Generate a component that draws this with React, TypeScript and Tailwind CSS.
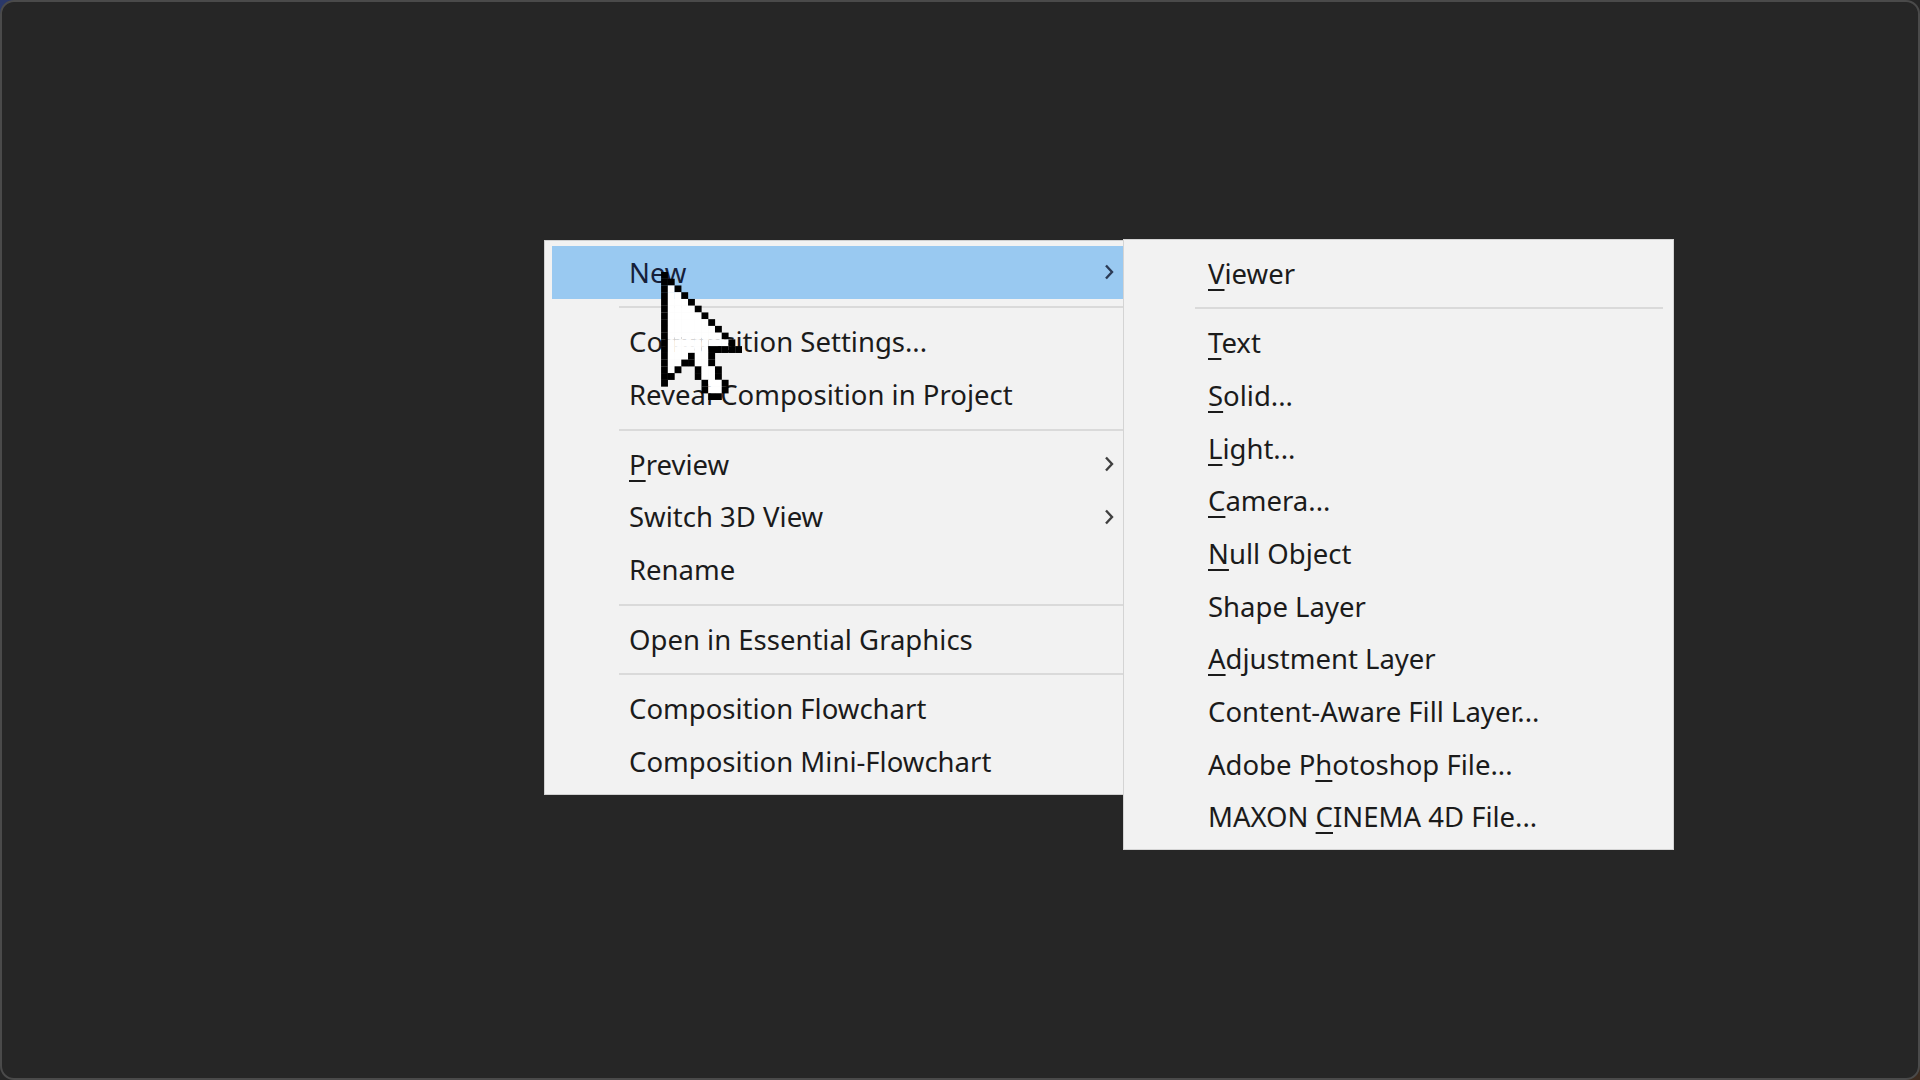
import React from "react";

const CURSOR = [
  "B...........",
  "BB..........",
  "BWB.........",
  "BWWB........",
  "BWWWB.......",
  "BWWWWB......",
  "BWWWWWB.....",
  "BWWWWWWB....",
  "BWWWWWWWB...",
  "BWWWWWWWWB..",
  "BWWWWWWWWWB.",
  "BWWWWWWBBBBB",
  "BWWWBWWB....",
  "BWWBBWWB....",
  "BWB..BWWB...",
  "BB...BWWB...",
  "B.....BWWB..",
  "......BWWB..",
  ".......BB...",
];

function Cursor() {
  const rects: React.ReactNode[] = [];
  CURSOR.forEach((row, y) => {
    row.split("").forEach((c, x) => {
      if (c === "B" || c === "W") {
        rects.push(
          <rect key={`${x}-${y}`} x={x} y={y} width={1.02} height={1.02} fill={c === "B" ? "#000" : "#fff"} />
        );
      }
    });
  });
  return (
    <svg
      className="absolute left-[659px] top-[270px] w-[81px] h-[128px] pointer-events-none"
      viewBox="0 0 12 19"
    >
      {rects}
    </svg>
  );
}

function Chevron({ hi }: { hi?: boolean }) {
  return (
    <svg className="w-[12px] h-[18px]" viewBox="0 0 12 18" fill="none">
      <path d="M3 2.5 L9 9 L3 15.5" stroke={hi ? "#2b3a55" : "#404040"} strokeWidth="2.4" />
    </svg>
  );
}

function M({ t, u }: { t: string; u?: number }) {
  if (u === undefined) return <>{t}</>;
  return (
    <>
      {t.slice(0, u)}
      <span className="underline decoration-[2px] underline-offset-[5px]">{t[u]}</span>
      {t.slice(u + 1)}
    </>
  );
}

function MainRow({ t, u, sub, hi }: { t: string; u?: number; sub?: boolean; hi?: boolean }) {
  return (
    <div
      className={`h-[52.7px] flex items-center pl-[77px] pr-[10px] ${hi ? "bg-[#99c9f1] text-[#16203a]" : ""}`}
    >
      <span className="flex-1"><M t={t} u={u} /></span>
      {sub && <Chevron hi={hi} />}
    </div>
  );
}

function MainSep() {
  return (
    <div className="h-[17px] flex items-center pl-[67px]">
      <div className="h-[2px] w-full bg-[#dadada]" />
    </div>
  );
}

function SubRow({ t, u }: { t: string; u?: number }) {
  return (
    <div className="h-[52.7px] flex items-center pl-[84px]">
      <span><M t={t} u={u} /></span>
    </div>
  );
}

export default function App() {
  return (
    <div className="w-[1920px] h-[1080px] bg-linear-to-br from-[#2a3869] via-[#262626] to-[#3d2c20] overflow-hidden">
      <div
        className="relative w-full h-full rounded-[14px] border-2 border-[#4a4a4a] bg-[#262626] overflow-hidden text-[#1b1b1b] text-[27.5px] leading-none"
        style={{ fontFamily: '"Noto Sans", "Open Sans", sans-serif' }}
      >
        {/* main context menu */}
        <div className="absolute left-[542px] top-[238px] w-[582px] h-[555px] bg-[#f2f2f2] border border-[#d0d0d0] pl-[7px] pt-[5px] pb-[5px] flex flex-col">
          <MainRow t="New" hi sub />
          <MainSep />
          <MainRow t="Composition Settings..." />
          <MainRow t="Reveal Composition in Project" />
          <MainSep />
          <MainRow t="Preview" u={0} sub />
          <MainRow t="Switch 3D View" sub />
          <MainRow t="Rename" />
          <MainSep />
          <MainRow t="Open in Essential Graphics" />
          <MainSep />
          <MainRow t="Composition Flowchart" />
          <MainRow t="Composition Mini-Flowchart" />
        </div>

        {/* submenu */}
        <div className="absolute left-[1121px] top-[237px] w-[551px] h-[611px] bg-[#f2f2f2] border border-[#d4d4d4] pt-[7px] flex flex-col">
          <SubRow t="Viewer" u={0} />
          <div className="h-[17px] flex items-center pl-[71px] pr-[10px]">
            <div className="h-[2px] w-full bg-[#dadada]" />
          </div>
          <SubRow t="Text" u={0} />
          <SubRow t="Solid..." u={0} />
          <SubRow t="Light..." u={0} />
          <SubRow t="Camera..." u={0} />
          <SubRow t="Null Object" u={0} />
          <SubRow t="Shape Layer" />
          <SubRow t="Adjustment Layer" u={0} />
          <SubRow t="Content-Aware Fill Layer..." />
          <SubRow t="Adobe Photoshop File..." u={7} />
          <SubRow t="MAXON CINEMA 4D File..." u={6} />
        </div>

        <Cursor />
      </div>
    </div>
  );
}
